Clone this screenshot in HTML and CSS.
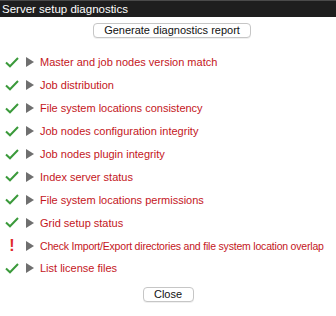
FILE: index.html
```html
<!DOCTYPE html>
<html lang="en">
<head>
    <meta charset="UTF-8">
    <title>Server setup diagnostics</title>
    <link rel="stylesheet" href="styles.css">
</head>
<body>
    <div class="dialog">
        <div class="titlebar">Server setup diagnostics</div>

        <div class="actions">
            <button class="btn btn-wide">Generate diagnostics report</button>
        </div>

        <ul class="checks">
            <li class="check ok">
                <span class="status"><svg width="14" height="11" viewBox="0 0 14 11"><path d="M1 5.5 L5 9.3 L13 1" /></svg></span>
                <span class="arrow"></span>
                <span class="label">Master and job nodes version match</span>
            </li>
            <li class="check ok">
                <span class="status"><svg width="14" height="11" viewBox="0 0 14 11"><path d="M1 5.5 L5 9.3 L13 1" /></svg></span>
                <span class="arrow"></span>
                <span class="label">Job distribution</span>
            </li>
            <li class="check ok">
                <span class="status"><svg width="14" height="11" viewBox="0 0 14 11"><path d="M1 5.5 L5 9.3 L13 1" /></svg></span>
                <span class="arrow"></span>
                <span class="label">File system locations consistency</span>
            </li>
            <li class="check ok">
                <span class="status"><svg width="14" height="11" viewBox="0 0 14 11"><path d="M1 5.5 L5 9.3 L13 1" /></svg></span>
                <span class="arrow"></span>
                <span class="label">Job nodes configuration integrity</span>
            </li>
            <li class="check ok">
                <span class="status"><svg width="14" height="11" viewBox="0 0 14 11"><path d="M1 5.5 L5 9.3 L13 1" /></svg></span>
                <span class="arrow"></span>
                <span class="label">Job nodes plugin integrity</span>
            </li>
            <li class="check ok">
                <span class="status"><svg width="14" height="11" viewBox="0 0 14 11"><path d="M1 5.5 L5 9.3 L13 1" /></svg></span>
                <span class="arrow"></span>
                <span class="label">Index server status</span>
            </li>
            <li class="check ok">
                <span class="status"><svg width="14" height="11" viewBox="0 0 14 11"><path d="M1 5.5 L5 9.3 L13 1" /></svg></span>
                <span class="arrow"></span>
                <span class="label">File system locations permissions</span>
            </li>
            <li class="check ok">
                <span class="status"><svg width="14" height="11" viewBox="0 0 14 11"><path d="M1 5.5 L5 9.3 L13 1" /></svg></span>
                <span class="arrow"></span>
                <span class="label">Grid setup status</span>
            </li>
            <li class="check warn">
                <span class="status"><span class="bang">!</span></span>
                <span class="arrow"></span>
                <span class="label label-long">Check Import/Export directories and file system location overlap</span>
            </li>
            <li class="check ok">
                <span class="status"><svg width="14" height="11" viewBox="0 0 14 11"><path d="M1 5.5 L5 9.3 L13 1" /></svg></span>
                <span class="arrow"></span>
                <span class="label">List license files</span>
            </li>
        </ul>

        <div class="footer">
            <button class="btn btn-close">Close</button>
        </div>
    </div>
</body>
</html>
```

FILE: styles.css
```css
body {
    margin: 0;
    background-color: #ffffff;
    font-family: 'Liberation Sans', Arial, sans-serif;
    color: #222;
}

.dialog {
    width: 336px;
    height: 316px;
}

.titlebar {
    height: 16px;
    line-height: 16px;
    padding-left: 2px;
    background-color: #1e1e1e;
    border-top: 1px solid #4a4a4a;
    color: #ffffff;
    font-size: 11.5px;
}

.actions {
    display: flex;
    justify-content: center;
    padding-top: 6px;
    padding-left: 8px;
}

.btn {
    height: 15px;
    padding: 0;
    background-color: #ffffff;
    border: 1px solid #c6c6c6;
    border-radius: 4px;
    box-shadow: 0 1px 0 rgba(0, 0, 0, 0.06);
    font-family: 'Liberation Sans', Arial, sans-serif;
    font-size: 11px;
    line-height: 13px;
    color: #111;
}

.btn-wide {
    width: 158px;
}

.btn-close {
    width: 51px;
}

.checks {
    list-style: none;
    margin: 0;
    padding: 13px 0 0 0;
}

.check {
    display: flex;
    align-items: center;
    height: 22.9px;
}

.status {
    flex-shrink: 0;
    width: 14px;
    height: 14px;
    margin-left: 5px;
    display: flex;
    align-items: center;
    justify-content: center;
}

.status svg path {
    fill: none;
    stroke: #3b9a3b;
    stroke-width: 2;
}

.bang {
    color: #e02a2a;
    font-weight: bold;
    font-size: 16px;
    line-height: 14px;
}

.arrow {
    flex-shrink: 0;
    width: 0;
    height: 0;
    margin-left: 7px;
    border-top: 5px solid transparent;
    border-bottom: 5px solid transparent;
    border-left: 8px solid #6f6f6f;
}

.label {
    margin-left: 6px;
    font-size: 11px;
    color: #c4161c;
    white-space: nowrap;
}

.label-long {
    font-size: 10.5px;
    letter-spacing: -0.2px;
}

.footer {
    display: flex;
    justify-content: center;
    padding-top: 7px;
}
```
